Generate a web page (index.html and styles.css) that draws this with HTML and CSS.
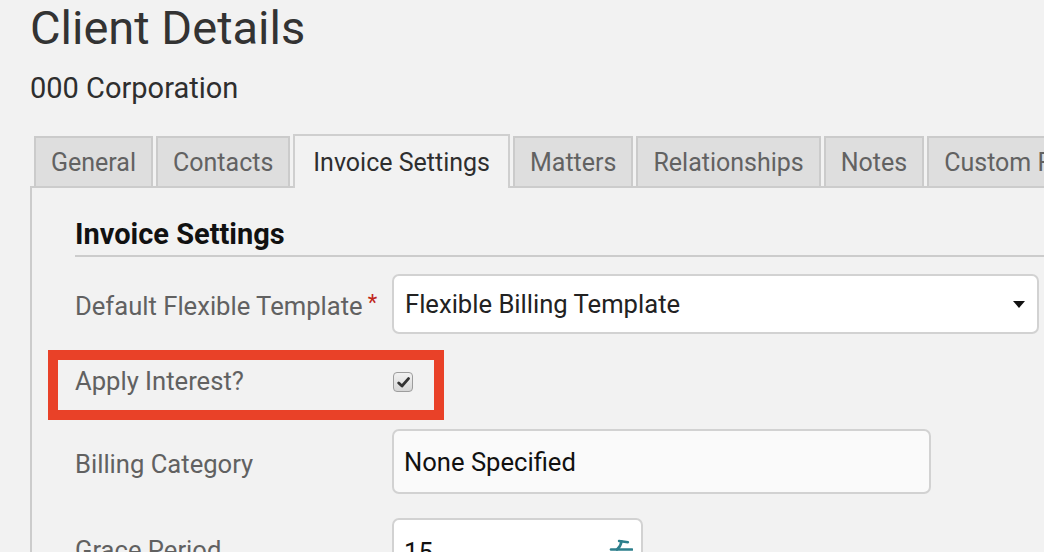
FILE: index.html
```html
<!DOCTYPE html>
<html lang="en">
<head>
<meta charset="utf-8">
<title>Client Details</title>
<link rel="stylesheet" href="styles.css">
</head>
<body>
<div class="page">
  <h1 class="title">Client Details</h1>
  <div class="subtitle">000 Corporation</div>

  <div class="tabs">
    <div class="tab">General</div>
    <div class="tab">Contacts</div>
    <div class="tab active">Invoice Settings</div>
    <div class="tab">Matters</div>
    <div class="tab">Relationships</div>
    <div class="tab">Notes</div>
    <div class="tab">Custom Fields</div>
  </div>

  <div class="panel">
    <h2 class="section-title">Invoice Settings</h2>

    <div class="form-row row-select">
      <label class="label">Default Flexible Template<span class="req">*</span></label>
      <div class="select">
        <span class="select-text">Flexible Billing Template</span>
        <span class="caret"></span>
      </div>
    </div>

    <div class="form-row row-check highlighted">
      <label class="label">Apply Interest?</label>
      <span class="checkbox">
        <svg viewBox="0 0 12 12" width="13" height="13"><path d="M1.6 6.4 L4.6 9.2 L10.6 2.4" fill="none" stroke="#333" stroke-width="2.6" stroke-linecap="round" stroke-linejoin="round"/></svg>
      </span>
    </div>

    <div class="form-row row-input">
      <label class="label label-low">Billing Category</label>
      <div class="input input-wide">None Specified</div>
    </div>

    <div class="form-row row-input">
      <label class="label label-low">Grace Period</label>
      <div class="input input-narrow">
        <span>15</span>
        <svg class="spin" viewBox="0 0 24 13" width="24" height="13"><path d="M2 10.5 H23" stroke="#2d7f8c" stroke-width="2.6" fill="none" stroke-linecap="round"/><path d="M8 10.5 C10.5 8.5 12 6 12.5 2.4" stroke="#2d7f8c" stroke-width="2.6" fill="none" stroke-linecap="round"/><path d="M10 2 L19 3.2" stroke="#2d7f8c" stroke-width="2.4" fill="none" stroke-linecap="round"/></svg>
      </div>
    </div>
  </div>
</div>
</body>
</html>
```

FILE: styles.css
```css
html, body {
  margin: 0;
  padding: 0;
  background: #f2f2f2;
  overflow: hidden;
}

body {
  font-family: Roboto, "Liberation Sans", sans-serif;
  color: #333;
  width: 1044px;
  height: 552px;
}

.page {
  padding-left: 30px;
}

.title {
  margin: 0;
  padding-top: 5px;
  font-size: 47px;
  line-height: 46px;
  font-weight: 400;
  color: #333;
}

.subtitle {
  margin-top: 23px;
  font-size: 29px;
  line-height: 29px;
  color: #2e2e2e;
}

.tabs {
  margin-top: 31px;
  display: flex;
  align-items: flex-end;
  gap: 3px;
  padding-left: 4px;
  white-space: nowrap;
  width: 1200px;
}

.tab {
  box-sizing: border-box;
  height: 50px;
  padding: 10px 15px 9px;
  font-size: 25px;
  line-height: 29px;
  color: #626262;
  background: #dedede;
  border: 2px solid #cbcbcb;
  border-bottom: none;
  flex: none;
}

.tab.active {
  height: 54px;
  padding: 12px 18px 11px;
  margin-bottom: -2px;
  background: #f2f2f2;
  color: #2e2e2e;
  border-color: #cfcfcf;
  position: relative;
  z-index: 1;
}

.panel {
  border-top: 2px solid #cccccc;
  border-left: 2px solid #cccccc;
  padding: 32px 0 0 43px;
  width: 1100px;
  height: 500px;
}

.section-title {
  margin: 0;
  font-size: 29px;
  line-height: 29px;
  font-weight: 700;
  color: #111;
  padding-bottom: 6px;
  border-bottom: 2px solid #cccccc;
}

.form-row {
  display: flex;
  align-items: center;
}

.label {
  width: 317px;
  flex: none;
  font-size: 25.6px;
  line-height: 29px;
  color: #616161;
}

.label-low {
  padding-top: 5px;
}

.req {
  color: #c0261b;
  font-size: 22px;
  margin-left: 5px;
  vertical-align: 5px;
}

.row-select {
  margin-top: 17px;
}

.select {
  box-sizing: border-box;
  width: 647px;
  height: 60px;
  border: 2px solid #d2d2d2;
  border-radius: 7px;
  background: #fff;
  display: flex;
  align-items: center;
  justify-content: space-between;
  padding: 0 12px 0 11px;
  font-size: 25.6px;
  color: #222;
}

.caret {
  width: 0;
  height: 0;
  border-left: 6.5px solid transparent;
  border-right: 6.5px solid transparent;
  border-top: 7px solid #111;
}

.row-check {
  margin-top: 27px;
  height: 40px;
  position: relative;
}

.highlighted::after {
  content: "";
  position: absolute;
  left: -27px;
  top: -11px;
  width: 396px;
  height: 70px;
  box-sizing: border-box;
  border: 10px solid #e94128;
  pointer-events: none;
}

.checkbox {
  box-sizing: border-box;
  width: 20px;
  height: 20px;
  margin-left: 1px;
  margin-top: 2px;
  border: 1.5px solid #9d9d9d;
  border-radius: 4px;
  background: linear-gradient(#f2f2f2, #d6d6d6);
  display: flex;
  align-items: center;
  justify-content: center;
}

.row-input {
  margin-top: 28px;
}

.row-input + .row-input {
  margin-top: 24px;
}

.input {
  box-sizing: border-box;
  border: 2px solid #d2d2d2;
  border-radius: 7px;
  display: flex;
  align-items: center;
  justify-content: space-between;
  padding: 0 8px 0 10px;
  font-size: 25.6px;
  color: #111;
}

.input-wide {
  width: 539px;
  height: 65px;
  background: #fafafa;
}

.input-narrow {
  width: 251px;
  height: 60px;
  background: #fff;
  align-items: flex-start;
  padding-top: 17px;
}

.spin {
  margin-top: 2px;
}
```
